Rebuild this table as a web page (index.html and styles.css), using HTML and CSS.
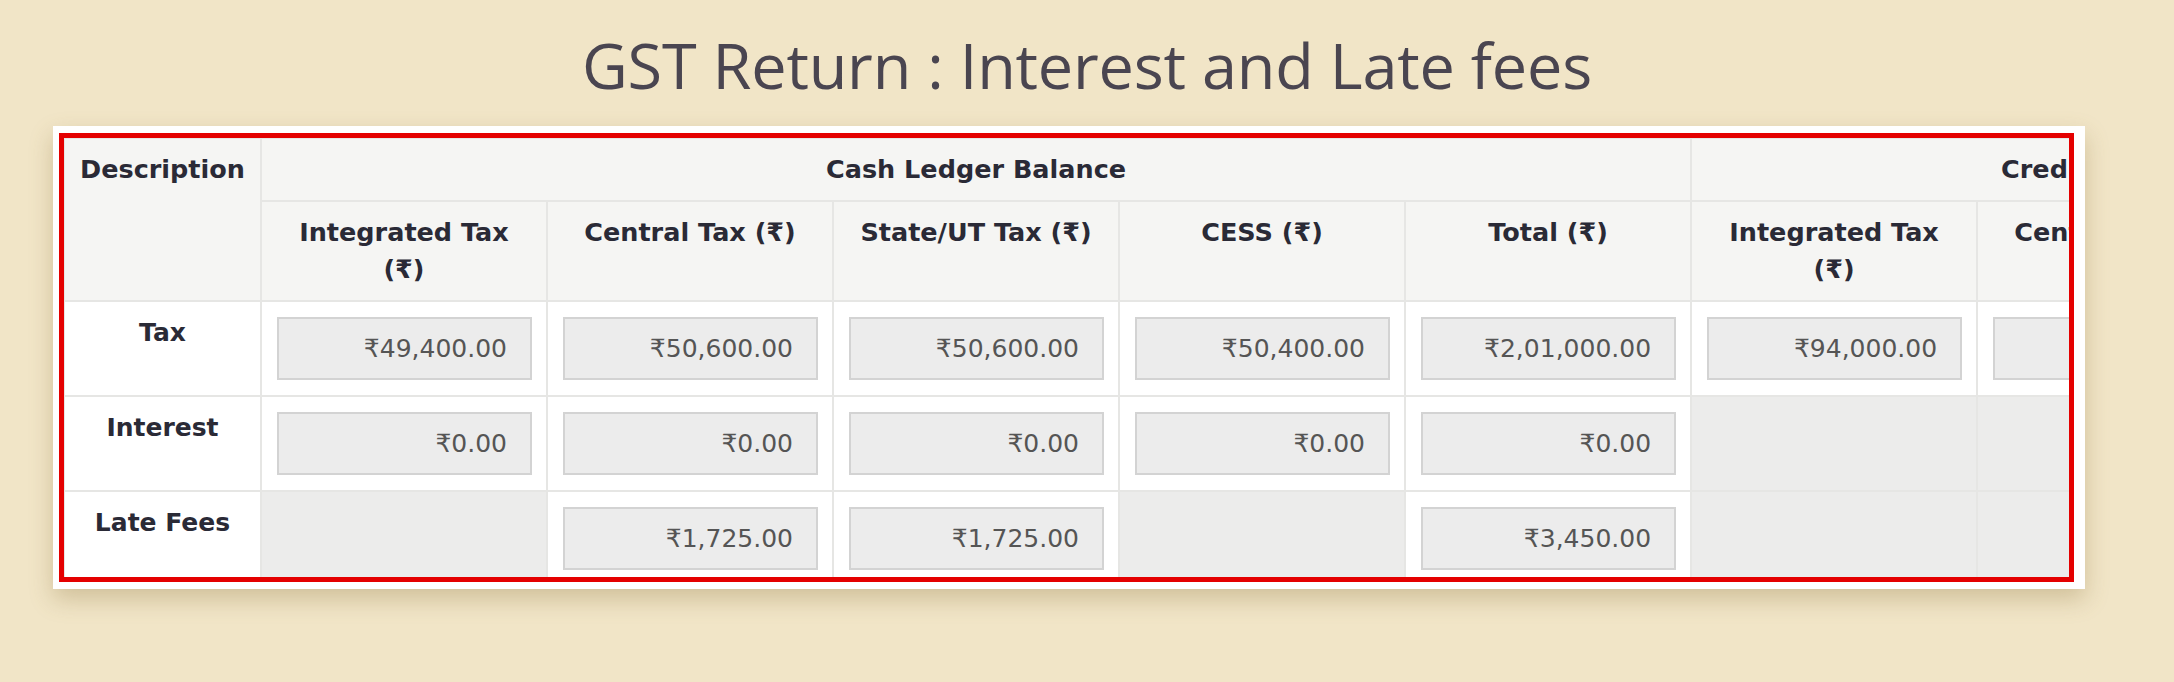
FILE: index.html
```html
<!DOCTYPE html>
<html lang="en">
<head>
<meta charset="utf-8">
<title>GST Return : Interest and Late fees</title>
<link rel="stylesheet" href="styles.css">
</head>
<body>
<h1 class="title">GST Return : Interest and Late fees</h1>
<div class="card">
  <div class="frame">
    <table class="ledger">
      <colgroup>
        <col class="c-desc">
        <col class="c-amt" span="10">
      </colgroup>
      <thead>
        <tr class="r-group">
          <th rowspan="2" class="h-desc">Description</th>
          <th colspan="5">Cash Ledger Balance</th>
          <th colspan="5" class="h-credit">Credit Ledger Balance</th>
        </tr>
        <tr class="r-cols">
          <th>Integrated Tax (₹)</th>
          <th>Central Tax (₹)</th>
          <th>State/UT Tax (₹)</th>
          <th>CESS (₹)</th>
          <th>Total (₹)</th>
          <th>Integrated Tax (₹)</th>
          <th>Central Tax (₹)</th>
          <th>State/UT Tax (₹)</th>
          <th>CESS (₹)</th>
          <th>Total (₹)</th>
        </tr>
      </thead>
      <tbody>
        <tr>
          <th class="lbl">Tax</th>
          <td><input class="amt" readonly value="₹49,400.00"></td>
          <td><input class="amt" readonly value="₹50,600.00"></td>
          <td><input class="amt" readonly value="₹50,600.00"></td>
          <td><input class="amt" readonly value="₹50,400.00"></td>
          <td><input class="amt" readonly value="₹2,01,000.00"></td>
          <td><input class="amt" readonly value="₹94,000.00"></td>
          <td><input class="amt" readonly value="₹1,000.00"></td>
          <td><input class="amt" readonly value="₹1,000.00"></td>
          <td><input class="amt" readonly value="₹0.00"></td>
          <td><input class="amt" readonly value="₹96,000.00"></td>
        </tr>
        <tr>
          <th class="lbl">Interest</th>
          <td><input class="amt" readonly value="₹0.00"></td>
          <td><input class="amt" readonly value="₹0.00"></td>
          <td><input class="amt" readonly value="₹0.00"></td>
          <td><input class="amt" readonly value="₹0.00"></td>
          <td><input class="amt" readonly value="₹0.00"></td>
          <td class="na"></td>
          <td class="na"></td>
          <td class="na"></td>
          <td class="na"></td>
          <td class="na"></td>
        </tr>
        <tr>
          <th class="lbl">Late Fees</th>
          <td class="na"></td>
          <td><input class="amt" readonly value="₹1,725.00"></td>
          <td><input class="amt" readonly value="₹1,725.00"></td>
          <td class="na"></td>
          <td><input class="amt" readonly value="₹3,450.00"></td>
          <td class="na"></td>
          <td class="na"></td>
          <td class="na"></td>
          <td class="na"></td>
          <td class="na"></td>
        </tr>
      </tbody>
    </table>
  </div>
</div>
</body>
</html>
```
FILE: styles.css
```css
html, body {
  margin: 0;
  padding: 0;
}

body {
  background: #f1e5c7;
  width: 2174px;
  height: 682px;
  overflow: hidden;
}

.title {
  margin: 0;
  padding-top: 22px;
  text-align: center;
  font-family: "Open Sans", "Noto Sans", sans-serif;
  font-weight: 400;
  font-size: 63px;
  line-height: 86px;
  color: #4a4550;
  letter-spacing: -0.2px;
}

.card {
  margin: 18px 0 0 53px;
  width: 2032px;
  height: 463px;
  box-sizing: border-box;
  padding: 7px 11px 7px 6px;
  background: #ffffff;
  box-shadow: 0 10px 22px rgba(140, 115, 60, 0.32);
}

.frame {
  height: 449px;
  box-sizing: border-box;
  border: 5px solid #e40000;
  overflow: hidden;
  background: #ffffff;
}

.ledger {
  border-collapse: collapse;
  table-layout: fixed;
  width: 3057px;
  margin: -1px 0 0 -1px;
  font-family: "DejaVu Sans", "Noto Sans", sans-serif;
}

.c-desc {
  width: 197px;
}

.c-amt {
  width: 286px;
}

.ledger th,
.ledger td {
  border: 2px solid #e6e6e4;
  padding: 0;
}

.ledger thead th {
  background: #f5f5f3;
  color: #2a2a36;
  font-weight: 700;
  font-size: 25.5px;
  line-height: 37px;
  text-align: center;
  vertical-align: top;
  padding: 12px 20px 0;
}

.r-group {
  height: 63px;
}

.r-cols {
  height: 100px;
}

.ledger thead th.h-desc {
  padding: 12px 8px 0;
}

.ledger thead th.h-credit {
  text-align: left;
  padding-left: 309px;
}

.ledger tbody tr {
  height: 93px;
}

.ledger tbody th.lbl {
  background: #ffffff;
  color: #2a2a36;
  font-weight: 700;
  font-size: 25px;
  line-height: 36px;
  text-align: center;
  vertical-align: top;
  padding-top: 13px;
}

.ledger tbody td {
  background: #ffffff;
  padding: 15px 14px 15px 15px;
  vertical-align: top;
}

.ledger tbody td.na {
  background: #ececeb;
}

.amt {
  display: block;
  width: 100%;
  height: 63px;
  box-sizing: border-box;
  margin: 0;
  border: 2px solid #d3d3d3;
  background: #ececec;
  padding: 0 23px 0 8px;
  text-align: right;
  font-family: "DejaVu Sans", "Noto Sans", sans-serif;
  font-size: 25px;
  color: #555555;
  outline: none;
}
```
